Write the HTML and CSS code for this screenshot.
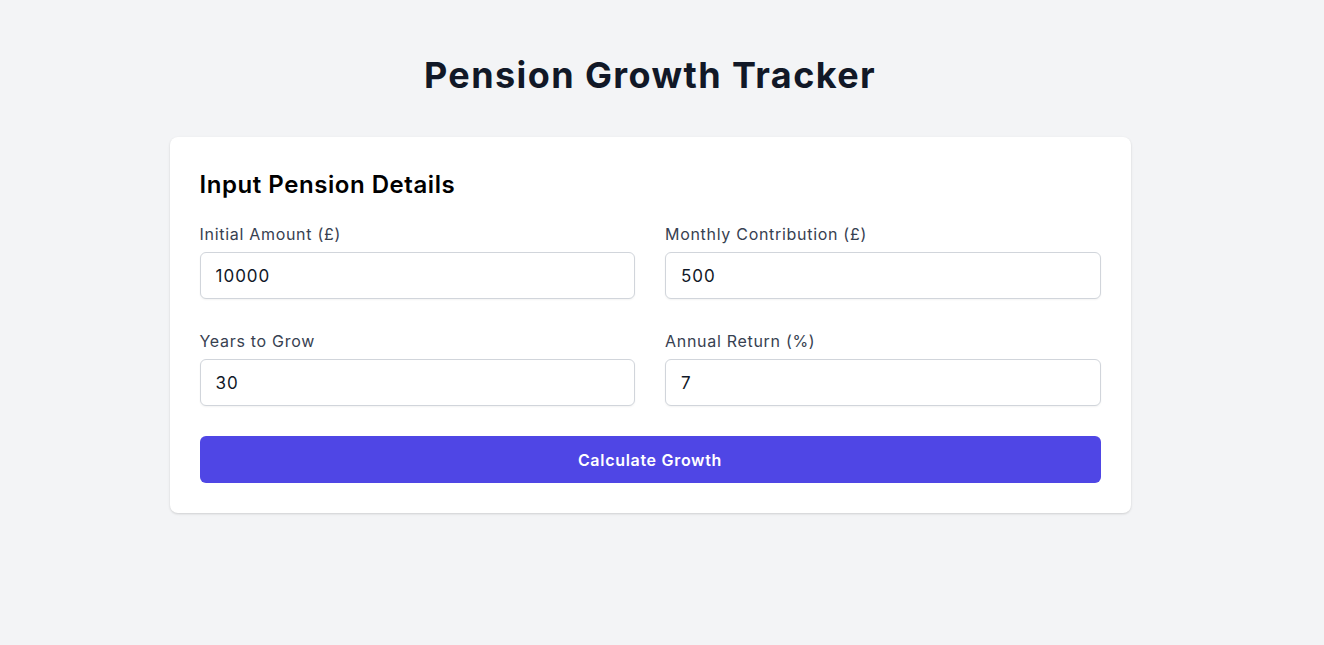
FILE: index.html
```html
<!DOCTYPE html>
<html lang="en">
<head>
<meta charset="utf-8">
<title>Pension Growth Tracker</title>
<link rel="stylesheet" href="styles.css">
</head>
<body>
<main class="page">
  <h1 class="title">Pension Growth Tracker</h1>
  <section class="card">
    <h2 class="card-title">Input Pension Details</h2>
    <div class="grid">
      <div class="field">
        <label class="label" for="initial">Initial Amount (£)</label>
        <input class="input" id="initial" type="text" value="10000">
      </div>
      <div class="field">
        <label class="label" for="monthly">Monthly Contribution (£)</label>
        <input class="input" id="monthly" type="text" value="500">
      </div>
      <div class="field">
        <label class="label" for="years">Years to Grow</label>
        <input class="input" id="years" type="text" value="30">
      </div>
      <div class="field">
        <label class="label" for="rate">Annual Return (%)</label>
        <input class="input" id="rate" type="text" value="7">
      </div>
    </div>
    <button class="button" type="button">Calculate Growth</button>
  </section>
</main>
</body>
</html>
```

FILE: styles.css
```css
* { box-sizing: border-box; }
html, body { margin: 0; padding: 0; }
body {
  background: #f3f4f6;
  font-family: Inter, "Noto Sans", sans-serif;
  color: #111827;
  min-height: 645px;
}
.page {
  width: 961px;
  margin: 0 auto;
  padding-top: 55px;
  position: relative;
  left: -12px;
}
.title {
  margin: 0 0 42px;
  text-align: center;
  font-size: 36px;
  line-height: 40px;
  font-weight: 700;
  color: #111827;
  letter-spacing: 1.4px;
}
.card {
  background: #fff;
  border-radius: 8px;
  box-shadow: 0 1px 3px rgba(0,0,0,0.1), 0 1px 2px rgba(0,0,0,0.06);
  padding: 32px 30px 30px;
}
.card-title {
  margin: 0 0 21px;
  font-size: 24px;
  line-height: 32px;
  font-weight: 600;
  color: #000;
  letter-spacing: 0.55px;
}
.grid {
  display: grid;
  grid-template-columns: 1fr 1fr;
  column-gap: 30px;
  row-gap: 30px;
}
.field { display: flex; flex-direction: column; }
.label {
  font-size: 16px;
  line-height: 24px;
  color: #374151;
  margin-bottom: 6px;
  letter-spacing: 0.7px;
}
.input {
  height: 47px;
  border: 1px solid #d1d5db;
  border-radius: 6px;
  padding: 0 15px;
  font-family: inherit;
  font-size: 17px;
  letter-spacing: 1px;
  color: #111827;
  background: #fff;
  box-shadow: 0 1px 2px rgba(0,0,0,0.05);
  outline: none;
}
.button {
  display: block;
  width: 100%;
  margin-top: 30px;
  height: 47px;
  border: none;
  border-radius: 6px;
  background: #4f46e5;
  color: #fff;
  font-family: inherit;
  font-size: 16px;
  font-weight: 600;
  letter-spacing: 0.7px;
  cursor: pointer;
}
```
